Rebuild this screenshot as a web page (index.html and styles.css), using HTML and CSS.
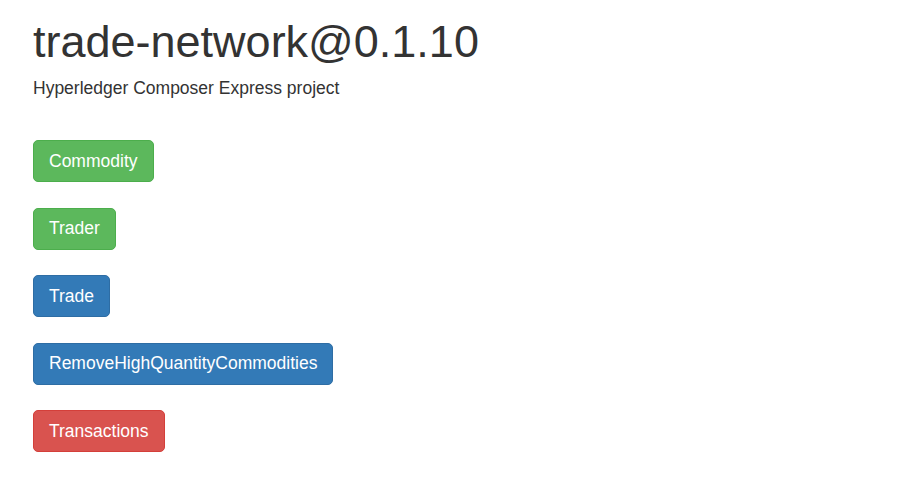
FILE: index.html
```html
<!DOCTYPE html>
<html>
<head>
<meta charset="utf-8">
<link rel="stylesheet" href="styles.css">
</head>
<body>
<div class="page">
  <h1 class="title">trade-network@0.1.10</h1>
  <p class="subtitle">Hyperledger Composer Express project</p>
  <div class="actions">
    <a class="btn btn-success">Commodity</a>
    <a class="btn btn-success">Trader</a>
    <a class="btn btn-primary">Trade</a>
    <a class="btn btn-primary">RemoveHighQuantityCommodities</a>
    <a class="btn btn-danger">Transactions</a>
  </div>
</div>
</body>
</html>
```
FILE: styles.css
```css
html, body {
  margin: 0;
  padding: 0;
  background: #fff;
}
body {
  font-family: "Liberation Sans", Arial, Helvetica, sans-serif;
  font-size: 17.5px;
  line-height: 25px;
  color: #333;
}
.page {
  padding: 16.5px 33px 20px;
}
.title {
  margin: 0 0 10px;
  font-size: 45px;
  font-weight: 500;
  line-height: 49.5px;
  color: #333;
}
.subtitle {
  margin: 0;
}
.actions {
  margin-top: 39px;
  display: flex;
  flex-direction: column;
  align-items: flex-start;
  gap: 25.5px;
}
.btn {
  display: inline-block;
  padding: 7.5px 15px;
  font-size: 17.5px;
  line-height: 25px;
  border: 1.25px solid transparent;
  border-radius: 5px;
  color: #fff;
  text-decoration: none;
  white-space: nowrap;
}
.btn-success {
  background: #5cb85c;
  border-color: #4cae4c;
}
.btn-primary {
  background: #337ab7;
  border-color: #2e6da4;
}
.btn-danger {
  background: #d9534f;
  border-color: #d43f3a;
}
```
